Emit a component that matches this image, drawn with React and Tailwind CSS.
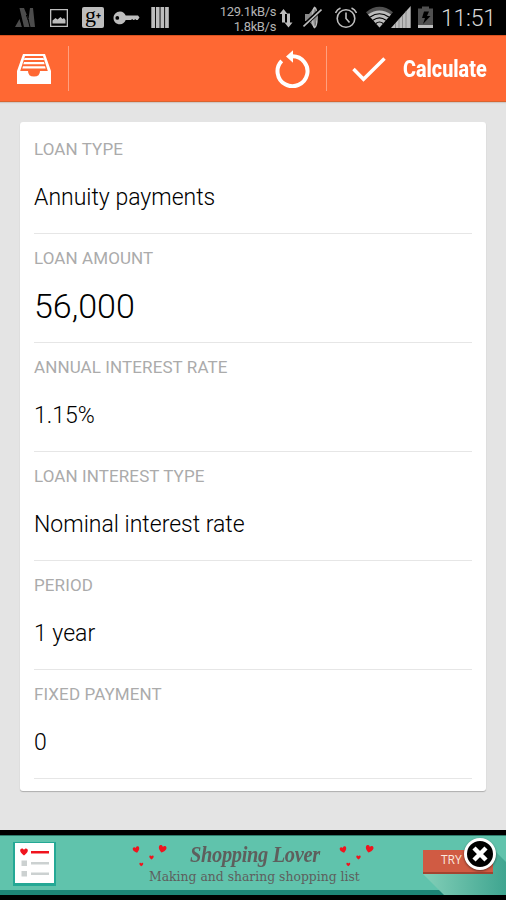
const fields = [
  { label: "LOAN TYPE", value: "Annuity payments" },
  { label: "LOAN AMOUNT", value: "56,000", large: true },
  { label: "ANNUAL INTEREST RATE", value: "1.15%" },
  { label: "LOAN INTEREST TYPE", value: "Nominal interest rate" },
  { label: "PERIOD", value: "1 year" },
  { label: "FIXED PAYMENT", value: "0" },
];

const StatusBar = () => (
  <div className="flex h-[35px] items-center bg-black text-[#bdbdbd]">
    {/* Notifications */}
    <svg className="ml-[15px] shrink-0" width="21" height="35" viewBox="15 0 21 35" fill="#4c4c4c">
      <path d="M19.500 8h4.500l4.500 11 1.500-11h3l2 19h-11z" />
      <path d="M15 27l4.500-8 2.500 8z" />
      <path d="M28.300 20l-2-5M22.500 27l-2.500-10M30 27l-2-8" stroke="#000" strokeWidth="1" />
    </svg>
    <svg className="ml-[14px] shrink-0" width="18" height="35" viewBox="50 0 18 35" fill="#bdbdbd">
      <path fillRule="evenodd" d="M50 9h18v18H50zM51.3 10.3v15.4h15.4V10.3z" />
      <path d="M52.500 23.500v-3l3-2.500 2 1.500 3-2.500 2 2 1.500-1 1.500 2v3.500z" />
    </svg>
    <div className="ml-[14px] flex h-[21px] w-[22px] shrink-0 items-center justify-center rounded-[2px] bg-[#bdbdbd] text-black">
      <span className="-mt-[6px] font-['Liberation_Serif',serif] text-[22px] leading-none">g</span>
      <span className="-mt-[2px] font-['Roboto',sans-serif] text-[9px] leading-none font-bold">+</span>
    </div>
    <svg className="ml-[9px] shrink-0" width="27" height="35" viewBox="113 0 27 35" fill="#bdbdbd">
      <path
        fillRule="evenodd"
        d="M120 11.500c3 0 4.800 1.700 5.700 4H138l1.500 2-1.800 2.500h-1.500l-1-1-1 1h-1l-1-1-1.200 1h-5.300c-1 2.700-3 4.200-5.700 4.200-4 0-6.500-2.900-6.500-6.300s2.700-6.400 6.500-6.400zM117.300 16a1.900 1.900 0 1 0 0 3.800 1.900 1.900 0 0 0 0-3.800z"
      />
    </svg>
    <svg className="ml-[11px] shrink-0" width="18" height="35" viewBox="151 0 18 35" fill="#bdbdbd">
      <path d="M151.300 7h3.700v21h-3.700zM155.900 7h3.700v21h-3.700zM160.500 7h3.700v21h-3.700zM165.100 7h3.700v21h-3.700z" />
    </svg>

    {/* Network speed */}
    <div className="mt-[2px] ml-auto text-right text-[13px] leading-[15px] tracking-[-0.35px] text-[#b4b4b4]">
      <div>129.1kB/s</div>
      <div>1.8kB/s</div>
    </div>
    <svg className="ml-[3px] shrink-0" width="14" height="35" viewBox="279 0 14 35" fill="#bdbdbd">
      <path d="M283.500 9l4 5h-2.500v8.500h-3V14h-2.500zM288.500 27.500l-4-5h2.500v-9h3v9h2.500z" />
    </svg>
    <svg className="ml-[10px] shrink-0" width="19" height="35" viewBox="303 0 19 35">
      <path d="M305 14h4l5-6.500q2 1 2 10t-2 10l-5-6.500h-4z" fill="#8a8a8a" />
      <path d="M314.500 7.500q2.500 1 2.500 10t-2.500 10q-2-2-2-10t2-10z" fill="none" stroke="#bdbdbd" strokeWidth="1.500" />
      <path d="M304 25.500L321.500 9" stroke="#000" strokeWidth="4" />
      <path d="M303.500 26.500L321.500 9.500" stroke="#bdbdbd" strokeWidth="1.700" />
    </svg>
    <svg className="ml-[13px] shrink-0" width="22" height="35" viewBox="335 0 22 35" fill="none" stroke="#bdbdbd" strokeWidth="1.600">
      <circle cx="346" cy="18.500" r="8.800" />
      <path d="M346 12.500v6l3.500 4M335.500 13q1.500-3.500 5-5M356.500 13q-1.500-3.500-5-5" />
    </svg>
    <svg className="ml-[9px] shrink-0" width="45" height="35" viewBox="366 0 45 35">
      <path d="M366 12.200Q379.500 1.500 393 12.200L379.500 27.500z" fill="#505050" />
      <path d="M368 14.500Q379.500 6.500 391 14.500L379.500 27.500z" fill="#bdbdbd" />
      <path d="M370.200 17Q379.500 10.500 388.800 17M373 20.300Q379.500 15.500 386 20.300M375.800 23.500Q379.500 20.500 383.200 23.500" fill="none" stroke="#000" strokeWidth="1.100" />
      <path d="M391 28L410.700 6v22z" fill="#bdbdbd" />
      <path d="M395.500 23v5M399 19v9M402.500 15v13M406 11v17" stroke="#777" strokeWidth=".7" />
    </svg>
    <svg className="ml-[7px] shrink-0" width="15" height="35" viewBox="418 0 15 35">
      <path d="M422 6.500h7v2h4V28h-15V8.500h4z" fill="#505050" />
      <path d="M418 25h15v3h-15z" fill="#bdbdbd" />
      <path d="M424 11.500h5l-2 4.500h3.500l-7.500 8 2-6h-3z" fill="#000" />
    </svg>
    <div className="mt-px mr-[11px] ml-[8px] w-[54px] text-right text-[23px] leading-none font-light tracking-[-0.2px] text-[#d8d8d8]">11:51</div>
  </div>
);

const ActionBar = () => (
  <div className="flex h-[67px] items-center border-t border-b border-t-[#d8511f] border-b-[#d9642f] bg-[#ff6833] text-white shadow-[0_1px_1px_#cfc9c6]">
    <svg className="mt-px ml-[17px]" width="34" height="30" viewBox="0 0 34 30" fill="#fff">
      <path fillRule="evenodd" d="M6 0h22l6 17v13H0V17zM8 2L3.200 17H11q0 5.500 6 5.500t6-5.500h7.800L26 2z" />
      <path d="M7.500 4h19l.5 2H7zM7 8h20l.6 2.200H6.300zM6 12.200h22l.7 2.300H5.300z" />
    </svg>
    <div className="ml-[17px] h-[45px] w-px bg-[#ffa080]" />
    <svg className="ml-auto" width="35" height="38" viewBox="274.500 50 35 38">
      <path d="M281.200 60.800A15 15 0 1 0 291.800 56.200" fill="none" stroke="#fff" strokeWidth="4" />
      <path d="M285.500 56.500L292.500 50.300v12.400z" fill="#fff" />
    </svg>
    <div className="ml-[16px] h-[45px] w-px bg-[#ffa080]" />
    <svg className="mt-[2px] ml-[25px]" width="34" height="25" viewBox="352 57 34 25">
      <path d="M353.500 69L363.500 79.200L384.500 58.500" fill="none" stroke="#fff" strokeWidth="3.500" />
    </svg>
    <span className="mt-[4px] mr-[20px] ml-[17px] w-[83px]">
      <span className="inline-block origin-left scale-x-[0.86] text-[23px] leading-none font-extrabold">Calculate</span>
    </span>
  </div>
);

const Field = ({ label, value, large }) => (
  <div className="flex h-[109px] flex-col border-b border-[#e6e6e6]">
    <div className="mt-[14px] h-5 text-[17px] leading-5 tracking-[0.1px] text-[#ababab]">{label}</div>
    <div
      className={`flex h-[60px] items-center font-light text-black ${
        large ? "mt-[8px] text-[34px]" : "mt-[9px] text-[23px]"
      }`}
    >
      {value}
    </div>
  </div>
);

const Heart = ({ x, y, size, rotate }) => (
  <path
    transform={`translate(${x} ${y}) rotate(${rotate}) scale(${size / 10})`}
    d="M0 5C-2 3.500 -5.500 1 -5.500 -2C-5.500 -6 -1 -6 0 -3C1 -6 5.500 -6 5.500 -2C5.500 1 2 3.500 0 5z"
    fill="#f0141e"
  />
);

const Hearts = () => (
  <svg width="36" height="24" viewBox="132 844 36 24">
    <Heart x={136.300} y={848.800} size={6} rotate={-15} />
    <Heart x={162.300} y={848} size={7} rotate={15} />
    <Heart x={151.500} y={856.500} size={4} rotate={0} />
    <Heart x={141.300} y={863.500} size={3.500} rotate={0} />
  </svg>
);

const AdBanner = () => (
  <div className="relative flex h-[70px] overflow-hidden border-t-[5px] border-b-[5px] border-black bg-[#60c3ac]">
    <div className="flex w-full border-t border-b-[5px] border-t-[#2e7b6b] border-b-[#1d8576]">
      <div className="mt-[7px] ml-[15px] h-10 w-[39px] shrink-0 bg-white shadow-[0_1px_0_2px_#24a895]">
        <svg width="39" height="40" viewBox="15 843 39 40">
          <Heart x={24} y={852} size={7} rotate={0} />
          <path d="M31 851h18v2.500H31z" fill="#f0141e" />
          <path d="M21.500 860.500h5.500v5.500h-5.500zM31 862h18v2.500H31zM21.500 871h5.500v5.500h-5.500zM31 872.500h18v2.500H31z" fill="#ccd1d1" />
        </svg>
      </div>
      <div className="ml-[78px] flex w-[244px] flex-col items-start text-[#5e5f5d]">
        <div className="flex h-[32px] items-center">
          <div className="mt-[9px]"><Hearts /></div>
          <div className="mt-[6px] ml-[22px] w-[131px]">
            <div className="origin-left scale-x-[0.87] font-['Liberation_Serif',serif] text-[23.500px] leading-none font-bold tracking-[-0.4px] whitespace-nowrap italic">
              Shopping Lover
            </div>
          </div>
          <div className="mt-[9px] ml-[18px]"><Hearts /></div>
        </div>
        <div className="ml-[17px] font-['DejaVu_Serif',serif] text-[12.400px] leading-[17px] whitespace-nowrap">
          Making and sharing shopping list
        </div>
      </div>
    </div>
    {/* Long shadow cast by the call-to-action */}
    <svg className="absolute top-0 right-0" width="84" height="60" viewBox="422 835 84 60">
      <defs>
        <linearGradient id="cast" x1="0" x2="1">
          <stop offset="0" stopColor="#83cfb8" />
          <stop offset="1" stopColor="#3fa590" />
        </linearGradient>
      </defs>
      <path d="M423 874L444 895H506V862L492 848z" fill="url(#cast)" />
    </svg>
    <div className="absolute top-[15px] right-[13px] h-6 w-[70px] border-b-2 border-[#a34430] bg-[#d05b43] pl-[18px] font-['Open_Sans',sans-serif] text-[12px] leading-[20px] text-[#fbe9df]">
      TRY
    </div>
    <svg className="absolute top-[1px] right-[8px] drop-shadow-[0_1px_1px_rgba(0,0,0,0.5)]" width="36" height="36" viewBox="0 0 36 36">
      <circle cx="18" cy="18" r="14.500" fill="#000" stroke="#fff" strokeWidth="3" />
      <path d="M12 12l12 12M24 12L12 24" stroke="#fff" strokeWidth="4.500" />
    </svg>
  </div>
);

const App = () => {
  return (
    <div className="flex h-[900px] w-[506px] flex-col overflow-hidden bg-[#e4e4e4] font-['Roboto',sans-serif]">
      <StatusBar />
      <ActionBar />
      <main className="flex-1 px-5 pt-5">
        <div className="h-[669px] rounded-[3px] bg-white px-[14px] pt-[3px] shadow-[0_1px_1px_#adadad]">
          {fields.map((field) => (
            <Field key={field.label} {...field} />
          ))}
        </div>
      </main>
      <AdBanner />
    </div>
  );
};

export default App;
